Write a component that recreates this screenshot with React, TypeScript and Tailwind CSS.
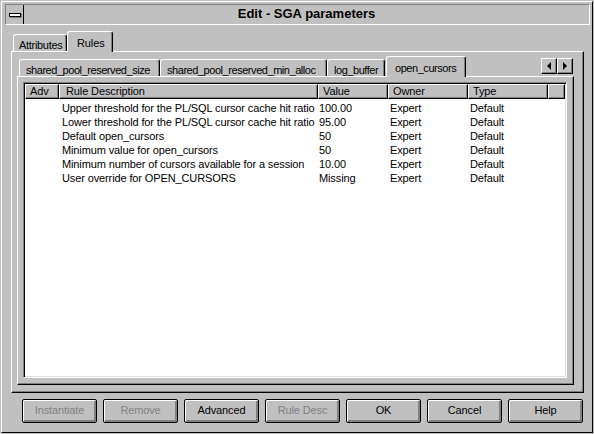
import React from 'react';

const rows = [
  { desc: 'Upper threshold for the PL/SQL cursor cache hit ratio', value: '100.00' },
  { desc: 'Lower threshold for the PL/SQL cursor cache hit ratio', value: '95.00' },
  { desc: 'Default open_cursors', value: '50' },
  { desc: 'Minimum value for open_cursors', value: '50' },
  { desc: 'Minimum number of cursors available for a session', value: '10.00' },
  { desc: 'User override for OPEN_CURSORS', value: 'Missing' },
];

const buttons = [
  { label: 'Instantiate', disabled: true },
  { label: 'Remove', disabled: true },
  { label: 'Advanced', disabled: false },
  { label: 'Rule Desc', disabled: true },
  { label: 'OK', disabled: false },
  { label: 'Cancel', disabled: false },
  { label: 'Help', disabled: false },
];

const tabBase =
  'bg-[#c0c0c0] border-t border-l border-t-white border-l-white border-r border-r-black rounded-t-[3px] shadow-[inset_-1px_0_0_#808080] flex items-start whitespace-nowrap overflow-hidden';

function Tab({ label, selected, className }: { label: string; selected?: boolean; className: string }) {
  return (
    <div
      className={
        tabBase +
        ' ' +
        className +
        (selected ? ' relative z-10 -mb-px h-[21px] pt-[3px]' : ' h-[17px] pt-[2px]')
      }
    >
      {label}
    </div>
  );
}

function Panel({ className, children }: { className: string; children?: React.ReactNode }) {
  return (
    <div
      className={
        'bg-[#c0c0c0] border border-t-white border-l-white border-r-black border-b-black shadow-[inset_-1px_-1px_0_#808080] ' +
        className
      }
    >
      {children}
    </div>
  );
}

function ArrowButton({ dir }: { dir: 'left' | 'right' }) {
  return (
    <div className="w-[16px] h-[16px] border border-t-white border-l-white border-r-black border-b-black shadow-[inset_-1px_-1px_0_#808080] flex items-center justify-center">
      {dir === 'left' ? (
        <div className="w-0 h-0 border-y-[4px] border-y-transparent border-r-[4px] border-r-black" />
      ) : (
        <div className="w-0 h-0 border-y-[4px] border-y-transparent border-l-[4px] border-l-black" />
      )}
    </div>
  );
}

const headCell =
  'h-[15px] border border-t-white border-l-white border-r-black border-b-black shadow-[inset_-1px_-1px_0_#808080] leading-[12px] whitespace-nowrap overflow-hidden';

export default function App() {
  return (
    <div className="w-[594px] h-[434px] bg-[#c0c0c0] p-px text-[11px] tracking-[-0.12px] text-black font-['Liberation_Sans',Arial,sans-serif] select-none">
      <div className="h-full border border-t-white border-l-white border-r-black border-b-black flex flex-col">
        {/* title bar */}
        <div className="mt-[2px] ml-[3px] mr-[2px] h-[21px] flex border border-t-[#808080] border-l-[#808080] border-b-white border-r-white">
          <div className="w-[18px] border-r border-r-black flex items-center justify-center">
            <div className="w-[12px] h-[4px] bg-white border border-black shadow-[1px_1px_0_#808080]" />
          </div>
          <div className="flex-1 flex items-center justify-center text-[13px] font-bold tracking-normal pb-px">
            Edit - SGA parameters
          </div>
        </div>

        {/* outer tabs */}
        <div className="mt-[6px] ml-[9px] mr-[8px]">
          <div className="h-[20px] flex items-end pl-[2px]">
            <Tab label="Attributes" className="w-[54px] pl-[5px] tracking-[-0.3px]" />
            <Tab label="Rules" selected className="w-[46px] pl-[9px]" />
          </div>
          <Panel className="h-[342px] flex flex-col">
            <div className="mt-[4px] ml-[5px] mr-[9px] h-[20px] flex items-end">
              <div className="flex items-end pl-[2px] tracking-[-0.45px]">
                <Tab label="shared_pool_reserved_size" className="w-[141px] pl-[6px]" />
                <Tab label="shared_pool_reserved_min_alloc" className="w-[167px] pl-[6px]" />
                <Tab label="log_buffer" className="w-[58px] pl-[6px]" />
                <Tab label="open_cursors" selected className="w-[80px] pl-[8px] ml-[1px]" />
              </div>
              <div className="ml-auto self-start mt-[2px] mr-px flex">
                <ArrowButton dir="left" />
                <ArrowButton dir="right" />
              </div>
            </div>
            <Panel className="ml-[5px] mr-[9px] h-[309px] flex flex-col">
              {/* list view */}
              <div className="mt-[5px] ml-[5px] mr-[6px] h-[296px] bg-white border border-t-[#808080] border-l-[#808080] border-r-white border-b-white p-px shadow-[inset_1px_1px_0_#000,inset_-1px_-1px_0_#dfdfdf]">
                <div className="flex bg-[#c0c0c0]">
                  <div className={headCell + ' w-[34px] pl-[4px]'}>Adv</div>
                  <div className={headCell + ' w-[259px] pl-[6px]'}>Rule Description</div>
                  <div className={headCell + ' w-[70px] pl-[4px]'}>Value</div>
                  <div className={headCell + ' w-[80px] pl-[4px]'}>Owner</div>
                  <div className={headCell + ' w-[80px] pl-[4px]'}>Type</div>
                  <div className={headCell + ' flex-1'} />
                </div>
                <div className="pt-[2px]">
                  {rows.map((r, i) => (
                    <div key={i} className="flex h-[14px] leading-[14px] whitespace-nowrap">
                      <div className="w-[34px]" />
                      <div className="w-[259px] pl-[3px] overflow-hidden">{r.desc}</div>
                      <div className="w-[70px] pl-[1px]">{r.value}</div>
                      <div className="w-[80px] pl-[2px]">Expert</div>
                      <div className="w-[80px] pl-[2px]">Default</div>
                    </div>
                  ))}
                </div>
              </div>
            </Panel>
          </Panel>
        </div>

        {/* buttons */}
        <div className="mt-[6px] ml-[20px] flex gap-[6px]">
          {buttons.map((b) => (
            <div
              key={b.label}
              className={
                'w-[75px] h-[24px] border border-black rounded-[2px] bg-[#c0c0c0] shadow-[inset_1px_1px_0_#fff,inset_-2px_-2px_0_#808080] flex items-center justify-center pb-px ' +
                (b.disabled ? 'text-[#808080]' : 'text-black')
              }
            >
              {b.label}
            </div>
          ))}
        </div>
      </div>
    </div>
  );
}
